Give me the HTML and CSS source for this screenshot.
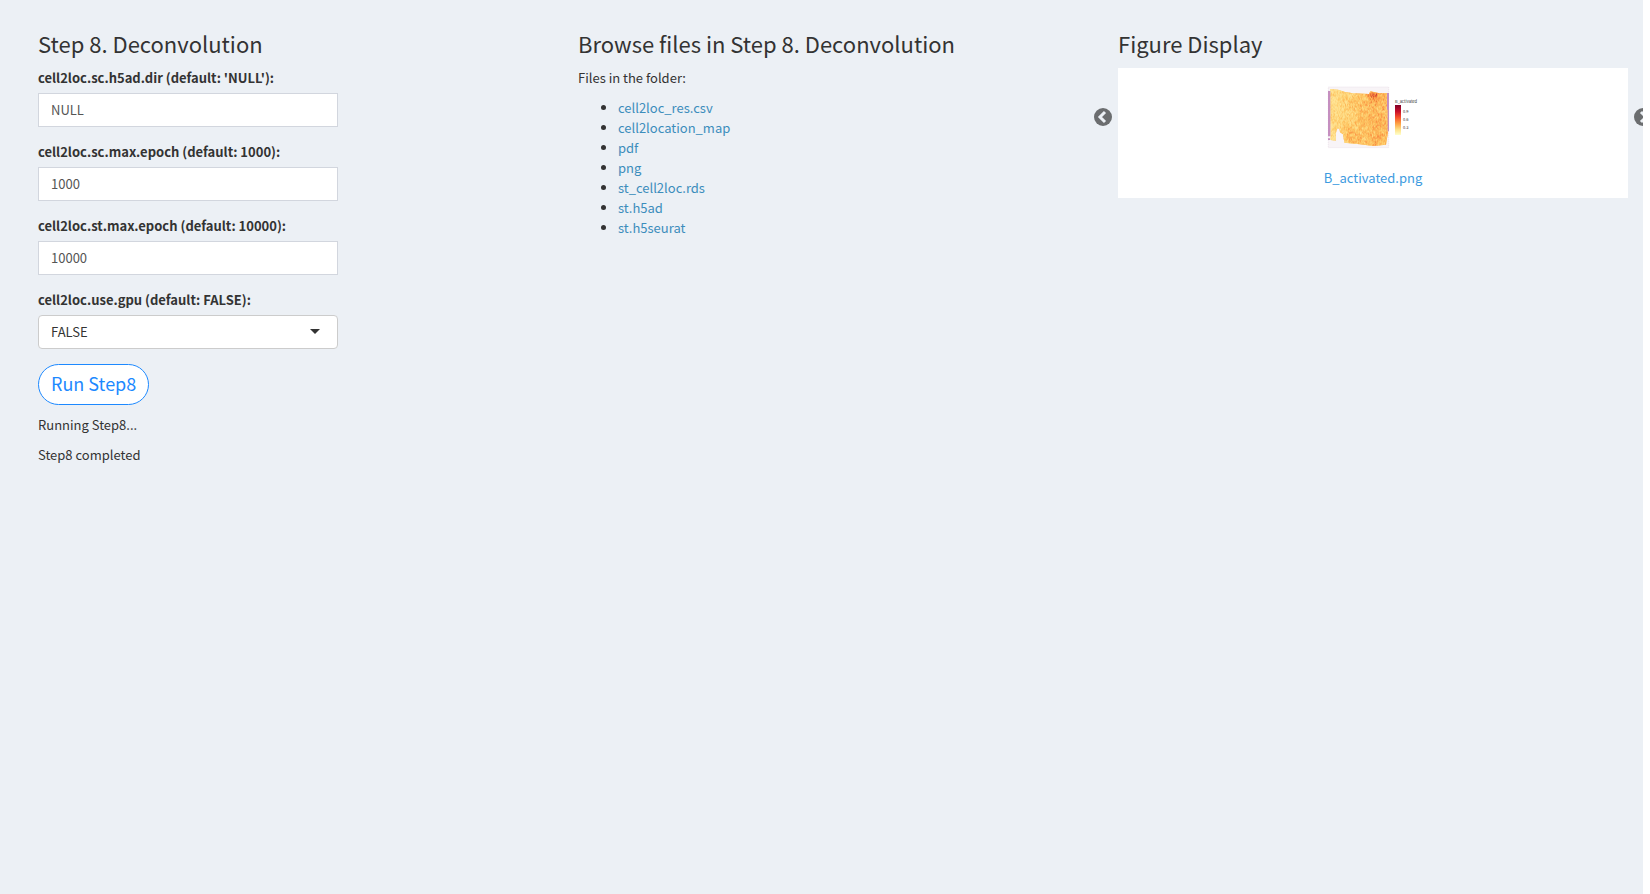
FILE: index.html
```html
<!DOCTYPE html>
<html lang="en">
<head>
<meta charset="utf-8">
<title>Step 8. Deconvolution</title>
<link rel="stylesheet" href="styles.css">
</head>
<body>
<main class="content">
  <section class="column">
    <h3 class="title">Step 8. Deconvolution</h3>
    <form class="step-form">
      <div class="form-group">
        <label for="dir">cell2loc.sc.h5ad.dir (default: 'NULL'):</label>
        <input class="control" id="dir" type="text" value="NULL">
      </div>
      <div class="form-group">
        <label for="sc-epoch">cell2loc.sc.max.epoch (default: 1000):</label>
        <input class="control" id="sc-epoch" type="text" value="1000">
      </div>
      <div class="form-group">
        <label for="st-epoch">cell2loc.st.max.epoch (default: 10000):</label>
        <input class="control" id="st-epoch" type="text" value="10000">
      </div>
      <div class="form-group">
        <label for="gpu">cell2loc.use.gpu (default: FALSE):</label>
        <div class="select-wrap">
          <select class="control control-select" id="gpu">
            <option>FALSE</option>
            <option>TRUE</option>
          </select>
        </div>
      </div>
      <button class="run-button" type="button">Run Step8</button>
    </form>
    <p class="text">Running Step8...</p>
    <p class="text">Step8 completed</p>
  </section>

  <section class="column">
    <h3 class="title">Browse files in Step 8. Deconvolution</h3>
    <p class="text">Files in the folder:</p>
    <ul class="files">
      <li><a href="#">cell2loc_res.csv</a></li>
      <li><a href="#">cell2location_map</a></li>
      <li><a href="#">pdf</a></li>
      <li><a href="#">png</a></li>
      <li><a href="#">st_cell2loc.rds</a></li>
      <li><a href="#">st.h5ad</a></li>
      <li><a href="#">st.h5seurat</a></li>
    </ul>
  </section>

  <section class="column">
    <h3 class="title">Figure Display</h3>
    <div class="carousel">
      <button class="arrow arrow-prev" type="button" aria-label="Previous">
        <svg viewBox="0 0 18 18"><circle cx="9" cy="9" r="9"/><path d="M11 4 6 9l5 5"/></svg>
      </button>
      <figure class="slide">
        <svg class="plot" viewBox="39 30 300 240" role="img" aria-label="B_activated">
          <defs>
            <linearGradient id="scale" x1="0" y1="0" x2="0" y2="1">
              <stop offset="0" stop-color="#800026"/>
              <stop offset=".22" stop-color="#c9102a"/>
              <stop offset=".42" stop-color="#f7542b"/>
              <stop offset=".62" stop-color="#fda245"/>
              <stop offset=".82" stop-color="#fee187"/>
              <stop offset="1" stop-color="#ffffcc"/>
            </linearGradient>
            <clipPath id="tissue">
              <path d="M60 57 84 59 105 66 130 70 177 72 181 64 205 69 230 69 235 75V180L228 224 190 228 150 223 103 218 99 193 90 187 88 174 81 178 77 191 77 212 62 210Z"/>
            </clipPath>
          </defs>
          <rect x="55" y="51" width="181" height="182" fill="#f8f4f7" stroke="#eadfe9" stroke-width="2" stroke-dasharray="4 2"/>
          <g id="spots" clip-path="url(#tissue)"><rect x="54" y="50" width="183" height="184" fill="#fdbd5d"/></g>
          <path d="M54 63h7v136h-7zM54 205h6v5h-6zM231 69h6v50h-6zM233 119h4v65h-4z" fill="#c58fc0"/>
          <rect x="255" y="105" width="18" height="90" fill="url(#scale)"/>
          <g class="plot-text">
            <text x="255" y="99">B_activated</text>
            <text x="279" y="129">0.9</text>
            <text x="279" y="153">0.6</text>
            <text x="279" y="177">0.3</text>
          </g>
        </svg>
        <figcaption><a class="caption" href="#">B_activated.png</a></figcaption>
      </figure>
      <button class="arrow arrow-next" type="button" aria-label="Next">
        <svg viewBox="0 0 18 18"><circle cx="9" cy="9" r="9"/><path d="M7 4 12 9l-5 5"/></svg>
      </button>
    </div>
  </section>
</main>
<script src="plot.js"></script>
</body>
</html>
```
FILE: styles.css
```css
* {
  box-sizing: border-box;
}

body {
  margin: 0;
  background: #fff;
  color: #333;
  font-family: "Noto Sans CJK SC", "Open Sans", sans-serif;
  font-size: 13px;
  line-height: 20px;
}

.content {
  display: grid;
  grid-template-columns: repeat(3, 1fr);
  min-height: 100vh;
  margin-right: 7px;
  padding: 30px 0 15px 23px;
  background: #ecf0f5;
  overflow: hidden;
}

.column {
  min-width: 0;
  padding: 0 15px;
}

.title {
  margin: 0 0 12px;
  font-size: 22px;
  font-weight: 400;
  line-height: 26px;
}

.form-group {
  display: flex;
  flex-direction: column;
  gap: 5px;
  width: 300px;
  max-width: 100%;
  margin-bottom: 15px;
}

.form-group label {
  font-weight: 700;
}

.control {
  width: 100%;
  height: 34px;
  padding: 5px 12px 7px;
  border: 1px solid #d2d6de;
  border-radius: 0;
  background: #fff;
  color: #555;
  font: inherit;
}

.select-wrap {
  position: relative;
}

.select-wrap::after {
  content: "";
  position: absolute;
  top: 14px;
  right: 18px;
  border: 5px solid transparent;
  border-top-color: #333;
  border-bottom: 0;
  pointer-events: none;
}

.control-select {
  display: block;
  padding: 6px 12px;
  appearance: none;
  border-color: #ccc;
  border-radius: 4px;
  color: #333;
}

.run-button {
  display: block;
  height: 41px;
  margin-bottom: 10px;
  padding: 0 12px 3px;
  border: 1px solid #1d89ff;
  border-radius: 21px;
  background: #fff;
  color: #1d89ff;
  font-family: inherit;
  font-size: 18px;
  line-height: 28px;
}

.text {
  margin: 0 0 10px;
}

.files {
  margin: 0;
  padding-left: 40px;
}

a {
  color: #3c8dbc;
  text-decoration: none;
}

.carousel {
  position: relative;
}

.slide {
  display: flex;
  flex-direction: column;
  align-items: center;
  gap: 8px;
  margin: 0;
  padding: 12px 0 10px;
  background: #fff;
}

.plot {
  display: block;
  width: 100px;
  height: 80px;
}

.plot-text {
  fill: #333;
  font-size: 12px;
}

.caption {
  color: #3d9be0;
}

.arrow {
  position: absolute;
  top: 40px;
  width: 18px;
  height: 18px;
  padding: 0;
  border: 0;
  background: none;
}

.arrow svg {
  display: block;
  fill: #6b6d6f;
}

.arrow path {
  fill: none;
  stroke: #ecf0f5;
  stroke-width: 3;
}

.arrow-prev {
  left: -24px;
}

.arrow-next {
  right: -24px;
}
```
FILE: plot.js
```js
const spots = document.getElementById("spots");
const palette = ["#fff0a5", "#fee695", "#feda80", "#fecb6b", "#fdb95a", "#fda54c", "#fa8440", "#e85a2c", "#c41f28"];
let seed = 8;

function random() {
  seed = (seed * 16807) % 2147483647;
  return seed / 2147483647;
}

// Coarse noise gives the patches, fine noise gives the grain.
const patches = Array.from({ length: 400 }, random);

for (let y = 50; y < 234; y += 3) {
  for (let x = 54; x < 237; x += 3) {
    const side = (x - 54) / 183;
    const hot = Math.exp(-((x - 189) ** 2 + (y - 78) ** 2) / 160) * 4;
    const low = Math.exp(-((x - 118) ** 2 + (y - 197) ** 2) / 300) * 2;
    const patch = patches[Math.floor((y - 50) / 10) * 20 + Math.floor((x - 54) / 10)];
    const noise = (patch - 0.5) * 2 + (random() + random() - 1) * 2.4;
    const level = Math.round(0.9 + Math.min(side * 4.5, 3) + hot + low + noise);
    const cell = document.createElementNS("http://www.w3.org/2000/svg", "rect");
    cell.setAttribute("x", x);
    cell.setAttribute("y", y);
    cell.setAttribute("width", 3);
    cell.setAttribute("height", 3);
    cell.setAttribute("fill", palette[Math.max(0, Math.min(8, level))]);
    spots.appendChild(cell);
  }
}
```
